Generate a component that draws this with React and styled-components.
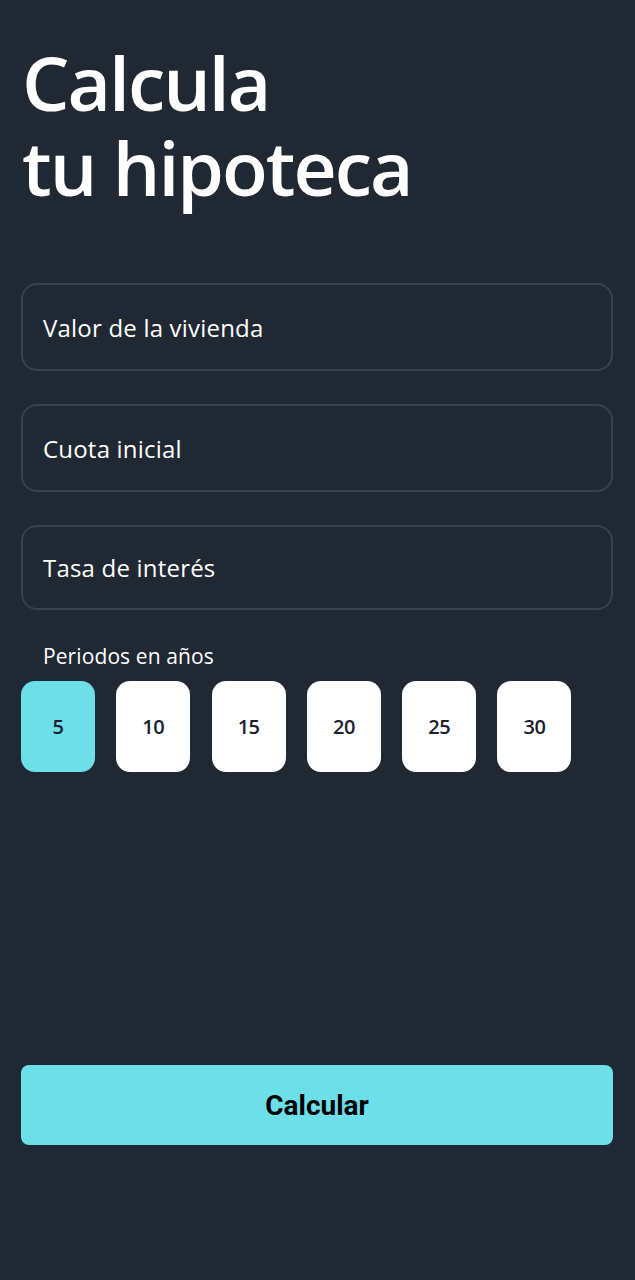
import React, { useState } from "react";
import styled, { createGlobalStyle } from "styled-components";

const Global = createGlobalStyle`
  html, body { margin: 0; padding: 0; background: #1f2833; }
  * { box-sizing: border-box; }
`;

const Page = styled.div`
  width: 635px;
  height: 1280px;
  background: #1f2833;
  padding: 40px 22px 0 21px;
  display: flex;
  flex-direction: column;
  font-family: "Open Sans", "Noto Sans", sans-serif;
  color: #ffffff;
`;

const Title = styled.h1`
  margin: 0 0 0 1px;
  font-family: "Open Sans", sans-serif;
  font-weight: 600;
  font-size: 75px;
  line-height: 85px;
  letter-spacing: -2px;
  color: #ffffff;
`;

const TitleLine = styled.span`
  display: block;
`;

const Form = styled.div`
  margin-top: 73px;
  display: flex;
  flex-direction: column;
  gap: 33px;
`;

const Field = styled.div`
  height: ${(p) => p.$h || 88}px;
  border: 2px solid #364152;
  border-radius: 16px;
  display: flex;
  align-items: center;
  padding-left: 20px;
  font-size: 24px;
  letter-spacing: 0.2px;
  color: #ffffff;
`;

const Label = styled.div`
  margin: 32px 0 0 22px;
  font-size: 21px;
  letter-spacing: 0.1px;
  line-height: 28px;
  color: #ffffff;
`;

const Periods = styled.div`
  margin-top: 11px;
  display: flex;
  gap: 21.3px;
`;

const Period = styled.button`
  width: 74px;
  height: 91px;
  border: none;
  border-radius: 14px;
  background: ${(p) => (p.$active ? "#6cdfe9" : "#ffffff")};
  color: #1b2130;
  font-family: "Open Sans", sans-serif;
  font-weight: 600;
  font-size: 20px;
  letter-spacing: -0.5px;
  padding: 0;
  cursor: pointer;
`;

const Spacer = styled.div`
  flex: 0 0 293px;
`;

const Submit = styled.button`
  width: 592px;
  height: 80px;
  border: none;
  border-radius: 8px;
  background: #6cdfe9;
  color: #000000;
  font-family: Roboto, sans-serif;
  font-weight: 700;
  font-size: 28px;
  cursor: pointer;
`;

export default function App() {
  const [sel, setSel] = useState(5);
  return (
    <>
      <Global />
      <Page>
        <Title>
          <TitleLine>Calcula</TitleLine>
          <TitleLine>tu hipoteca</TitleLine>
        </Title>
        <Form>
          <Field>Valor de la vivienda</Field>
          <Field>Cuota inicial</Field>
          <Field $h={85}>Tasa de interés</Field>
        </Form>
        <Label>Periodos en años</Label>
        <Periods>
          {[5, 10, 15, 20, 25, 30].map((n) => (
            <Period key={n} $active={sel === n} onClick={() => setSel(n)}>
              {n}
            </Period>
          ))}
        </Periods>
        <Spacer />
        <Submit>Calcular</Submit>
      </Page>
    </>
  );
}
